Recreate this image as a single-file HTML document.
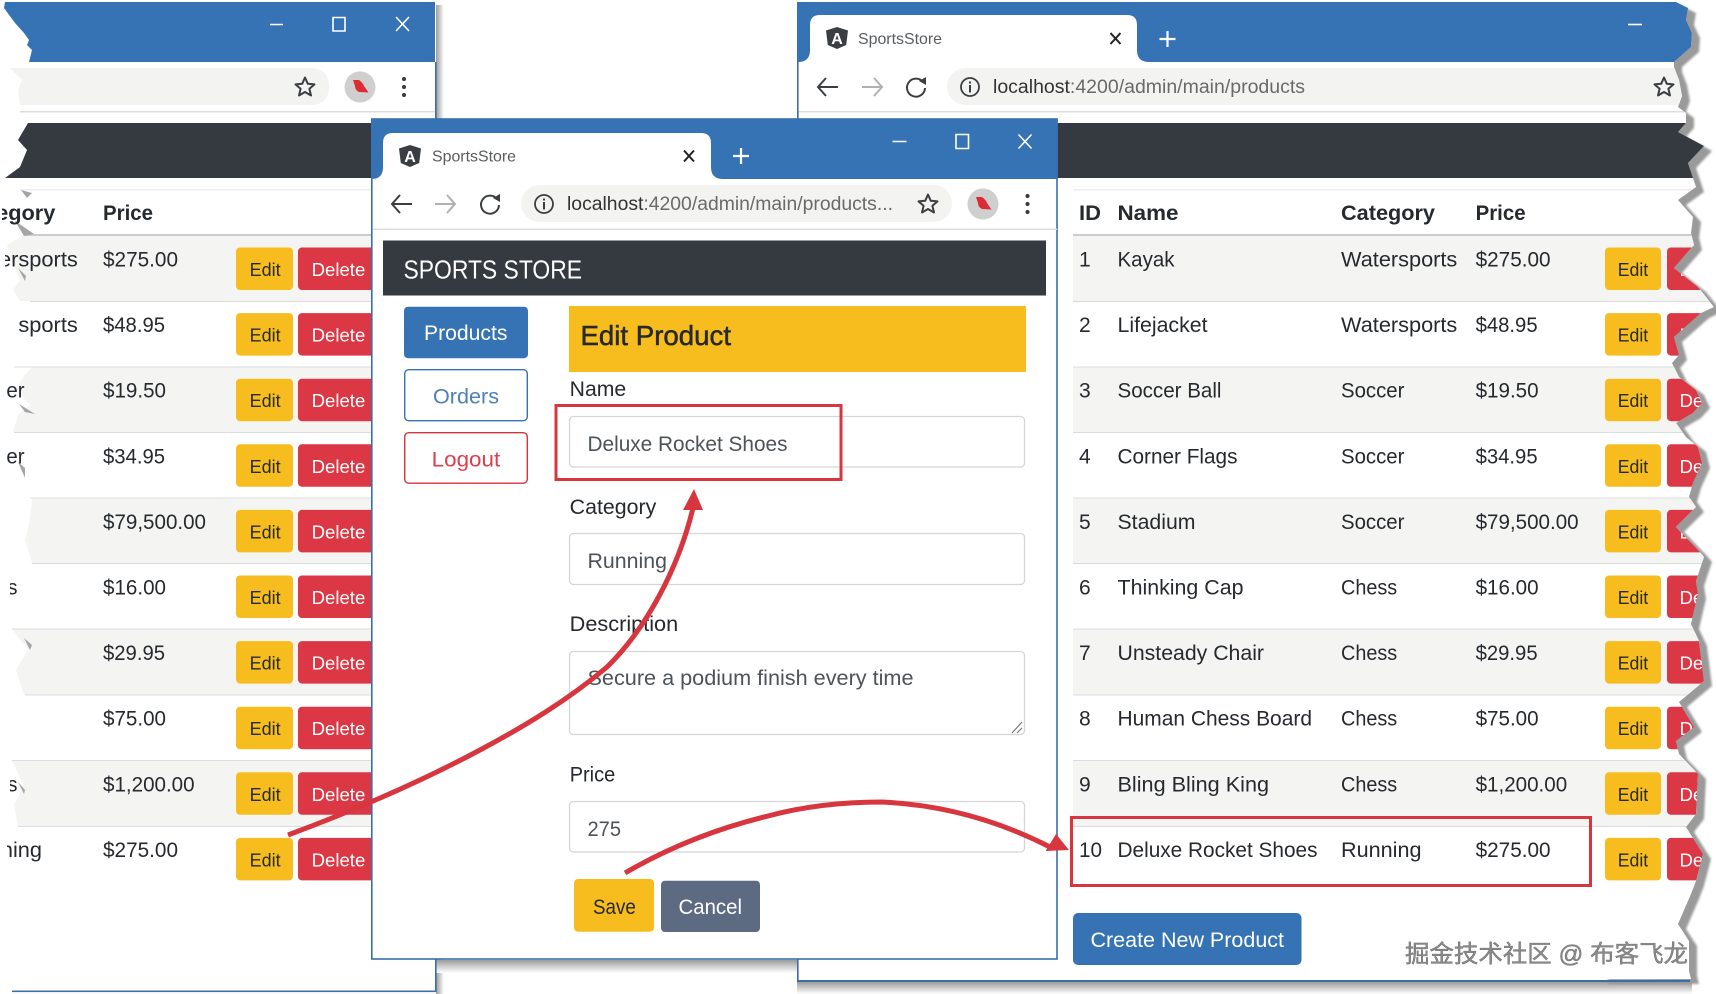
<!DOCTYPE html>
<html lang="en"><head><meta charset="utf-8"><title>SportsStore</title>
<style>
html,body{margin:0;padding:0;background:#fff;width:1716px;height:994px;overflow:hidden}
svg{display:block;position:absolute;left:0;top:0}
text{font-family:"Liberation Sans","Noto Sans CJK SC",sans-serif;font-size:21px;fill:#26292d;white-space:pre}
.h{font-weight:bold}
.b{font-size:18px;text-anchor:start}
.w{fill:#fff}
.m{fill:#4d5358}
.tab{font-size:16px;fill:#5a5d60}
.url{font-size:19px;fill:#6a6a6a}
.ic{fill:none;stroke:#3c3f42;stroke-width:2}
</style></head><body>
<svg width="1716" height="994" viewBox="0 0 1716 994" xmlns="http://www.w3.org/2000/svg">
<defs>
<linearGradient id="gd" x1="0" y1="0" x2="0" y2="1"><stop offset="0" stop-color="#9c9c9c"/><stop offset="1" stop-color="#fff"/></linearGradient>
<linearGradient id="gr" x1="0" y1="0" x2="1" y2="0"><stop offset="0" stop-color="#9c9c9c"/><stop offset="1" stop-color="#fff"/></linearGradient>
<filter id="bl" x="-5%" y="-5%" width="110%" height="110%"><feGaussianBlur stdDeviation="1"/></filter>
<clipPath id="cr"><polygon points="797,2 1676,2 1688,8 1686,20 1692,33 1691,47 1674,62 1674,67 1679,80 1682,96 1678,107 1686,113 1686,123 1678,132 1704,146 1688,163 1693,178 1696,187 1678,200 1693,217 1691,233 1694,245 1674,268 1698,287 1714,307 1701,313 1674,337 1679,355 1672,363 1679,377 1696,390 1702,403 1693,413 1676,423 1686,437 1698,447 1702,463 1693,483 1689,497 1696,507 1676,527 1699,551 1704,557 1696,581 1698,594 1694,611 1691,624 1699,641 1704,681 1679,702 1694,727 1676,741 1679,754 1698,774 1696,814 1686,827 1703,854 1696,881 1691,894 1678,924 1689,941 1689,971 1691,979 797,981"/></clipPath>
<clipPath id="c1"><rect x="5" y="240" width="100" height="50"/></clipPath>
<clipPath id="c2"><rect x="18" y="305" width="100" height="50"/></clipPath>
<clipPath id="c3"><rect x="7" y="370" width="100" height="50"/></clipPath>
<clipPath id="c4"><rect x="6" y="436" width="100" height="50"/></clipPath>
<clipPath id="c6"><rect x="10" y="567" width="100" height="50"/></clipPath>
<clipPath id="c9"><rect x="10" y="764" width="100" height="50"/></clipPath>
<clipPath id="c10"><rect x="7" y="830" width="100" height="50"/></clipPath>
<clipPath id="ch"><rect x="2" y="190" width="100" height="40"/></clipPath>
<g id="back"><path class="ic" d="M-10 0H10M-2 -9L-10 0L-2 9"/></g>
<g id="fwd"><path class="ic" style="stroke:#b0b0b0" d="M-10 0H10M2 -9L10 0L2 9"/></g>
<g id="rel"><path class="ic" d="M7 -5A9 9 0 1 0 9 1"/><path fill="#3c3f42" d="M3 -6L10 -10V-2Z"/></g>
<g id="star"><path fill="none" stroke="#3c3f42" stroke-width="2" stroke-linejoin="round" d="M0 -9.5L2.8 -3.2L9.5 -2.6L4.4 1.8L6 8.5L0 5L-6 8.5L-4.4 1.8L-9.5 -2.6L-2.8 -3.2Z"/></g>
<g id="info"><circle r="9" fill="none" stroke="#3c3f42" stroke-width="1.8"/><rect x="-1" y="-2" width="2" height="7.5" fill="#3c3f42"/><rect x="-1" y="-5.5" width="2" height="2" fill="#3c3f42"/></g>
<g id="dots"><circle cy="-8" r="2.1" fill="#3c3f42"/><circle r="2.1" fill="#3c3f42"/><circle cy="8" r="2.1" fill="#3c3f42"/></g>
<g id="av"><circle r="15.5" fill="#cfcfcf"/><path fill="#dd2b33" d="M-7 -7L-1 -7Q3 -4 4 -1L8.5 5.5L-1 5Q-5 3 -5 -1Z"/></g>
<g id="sh"><path fill="#3a3d42" d="M0 -11L11 -7.5L9.2 7L0 11L-9.2 7L-11 -7.5Z"/></g>
</defs>

<!-- LEFT WINDOW -->
<rect x="436" y="5" width="8" height="114" fill="url(#gr)"/>
<rect x="436" y="959" width="8" height="35" fill="url(#gr)"/>
<rect x="436" y="960" width="361" height="13" fill="url(#gd)"/>
<polygon fill="#3673b5" points="5,2 435,2 435,62 29,62 32,50 27,45 29,40 24,33 15,23 4,8"/>
<path stroke="#fff" stroke-width="1.6" fill="none" d="M270 24.5H283M333 17.5H345V31H333ZM396 17L409 31M409 17L396 31"/>
<path fill="#f3f3f1" d="M10 68H310Q329 68 329 86.5Q329 105 310 105H20L18 90L22 80Z"/>
<use href="#star" x="305" y="87"/><use href="#av" x="360" y="87"/><use href="#dots" x="404" y="87"/>
<rect x="20" y="111" width="415" height="1.5" fill="#dcdcdc"/>
<polygon fill="#343a40" points="28,123 371,123 371,178 5,178 20,167 27,150 18,140"/>
<rect x="20" y="189" width="351" height="1.5" fill="#eee"/>
<rect x="435" y="62" width="1.6" height="930" fill="#3a6ea8"/>
<rect x="12" y="990.5" width="424" height="1.6" fill="#3a6ea8"/>

<rect x="25" y="234" width="346" height="2" fill="#ccc"/>
<polygon fill="#f4f4f3" points="22,236 371,236 371,301 20,301 13,290 20,280 12,262 7,245"/>
<polygon fill="#f4f4f3" points="32,367 371,367 371,432 13,432 18,415 30,405 16,390 24,376"/>
<polygon fill="#f4f4f3" points="32,498 371,498 371,563 32,563 25,540 30,520"/>
<polygon fill="#f4f4f3" points="12,629 371,629 371,695 24,695 16,670 28,650"/>
<polygon fill="#f4f4f3" points="12,761 371,761 371,826 18,826 14,805 24,785"/>
<path stroke="#dcdcdc" stroke-width="1" d="M30 301.5H371M14 367H371M14 432.5H371M30 498H371M32 563.5H371M12 629H371M25 695H371M12 760.5H371M18 826.5H371"/>
<path fill="#a5a5a5" d="M21 190L32 193L27 198ZM15 221L34 234L24 236ZM18 268L26 276L25 281ZM19 404L35 414L25 412ZM18 462L25 468L25 478ZM24 638L32 645L30 650ZM18 782L25 790L24 794Z"/>

<text class="h" x="-39" y="220" textLength="94.4" lengthAdjust="spacingAndGlyphs" clip-path="url(#ch)">Category</text>
<text class="h" x="103" y="220" textLength="50" lengthAdjust="spacingAndGlyphs">Price</text>
<g>
<text x="-39" y="266.5" textLength="116.8" lengthAdjust="spacingAndGlyphs" clip-path="url(#c1)">Watersports</text>
<text x="-39" y="332.1" textLength="116.8" lengthAdjust="spacingAndGlyphs" clip-path="url(#c2)">Watersports</text>
<text x="-39" y="397.7" textLength="63.6" lengthAdjust="spacingAndGlyphs" clip-path="url(#c3)">Soccer</text>
<text x="-39" y="463.3" textLength="63.6" lengthAdjust="spacingAndGlyphs" clip-path="url(#c4)">Soccer</text>
<text x="-39" y="594.5" textLength="56.5" lengthAdjust="spacingAndGlyphs" clip-path="url(#c6)">Chess</text>
<text x="-39" y="791.3" textLength="56.5" lengthAdjust="spacingAndGlyphs" clip-path="url(#c9)">Chess</text>
<text x="-39" y="856.9" textLength="81" lengthAdjust="spacingAndGlyphs" clip-path="url(#c10)">Running</text>
</g>
<g>
<text x="103" y="266.5" textLength="75" lengthAdjust="spacingAndGlyphs">$275.00</text>
<text x="103" y="332.1" textLength="62" lengthAdjust="spacingAndGlyphs">$48.95</text>
<text x="103" y="397.7" textLength="63" lengthAdjust="spacingAndGlyphs">$19.50</text>
<text x="103" y="463.3" textLength="62" lengthAdjust="spacingAndGlyphs">$34.95</text>
<text x="103" y="528.9" textLength="103" lengthAdjust="spacingAndGlyphs">$79,500.00</text>
<text x="103" y="594.5" textLength="63" lengthAdjust="spacingAndGlyphs">$16.00</text>
<text x="103" y="660.1" textLength="62" lengthAdjust="spacingAndGlyphs">$29.95</text>
<text x="103" y="725.7" textLength="63" lengthAdjust="spacingAndGlyphs">$75.00</text>
<text x="103" y="791.3" textLength="91.6" lengthAdjust="spacingAndGlyphs">$1,200.00</text>
<text x="103" y="856.9" textLength="75" lengthAdjust="spacingAndGlyphs">$275.00</text>
</g>
<g fill="#f7bd1e">
<rect x="236" y="247.5" width="57" height="42.5" rx="4"/><rect x="236" y="313.1" width="57" height="42.5" rx="4"/><rect x="236" y="378.7" width="57" height="42.5" rx="4"/><rect x="236" y="444.3" width="57" height="42.5" rx="4"/><rect x="236" y="509.9" width="57" height="42.5" rx="4"/><rect x="236" y="575.5" width="57" height="42.5" rx="4"/><rect x="236" y="641.1" width="57" height="42.5" rx="4"/><rect x="236" y="706.7" width="57" height="42.5" rx="4"/><rect x="236" y="772.3" width="57" height="42.5" rx="4"/><rect x="236" y="837.9" width="57" height="42.5" rx="4"/>
</g>
<g fill="#dc3744">
<rect x="298" y="247.5" width="85" height="42.5" rx="4"/><rect x="298" y="313.1" width="85" height="42.5" rx="4"/><rect x="298" y="378.7" width="85" height="42.5" rx="4"/><rect x="298" y="444.3" width="85" height="42.5" rx="4"/><rect x="298" y="509.9" width="85" height="42.5" rx="4"/><rect x="298" y="575.5" width="85" height="42.5" rx="4"/><rect x="298" y="641.1" width="85" height="42.5" rx="4"/><rect x="298" y="706.7" width="85" height="42.5" rx="4"/><rect x="298" y="772.3" width="85" height="42.5" rx="4"/><rect x="298" y="837.9" width="85" height="42.5" rx="4"/>
</g>
<g>
<text class="b" x="249.6" y="276" textLength="31" lengthAdjust="spacingAndGlyphs">Edit</text><text class="b" x="249.6" y="341.6" textLength="31" lengthAdjust="spacingAndGlyphs">Edit</text><text class="b" x="249.6" y="407.2" textLength="31" lengthAdjust="spacingAndGlyphs">Edit</text><text class="b" x="249.6" y="472.8" textLength="31" lengthAdjust="spacingAndGlyphs">Edit</text><text class="b" x="249.6" y="538.4" textLength="31" lengthAdjust="spacingAndGlyphs">Edit</text><text class="b" x="249.6" y="604" textLength="31" lengthAdjust="spacingAndGlyphs">Edit</text><text class="b" x="249.6" y="669.6" textLength="31" lengthAdjust="spacingAndGlyphs">Edit</text><text class="b" x="249.6" y="735.2" textLength="31" lengthAdjust="spacingAndGlyphs">Edit</text><text class="b" x="249.6" y="800.8" textLength="31" lengthAdjust="spacingAndGlyphs">Edit</text><text class="b" x="249.6" y="866.4" textLength="31" lengthAdjust="spacingAndGlyphs">Edit</text>
<text class="b w" x="311.6" y="276" textLength="53.7" lengthAdjust="spacingAndGlyphs">Delete</text><text class="b w" x="311.6" y="341.6" textLength="53.7" lengthAdjust="spacingAndGlyphs">Delete</text><text class="b w" x="311.6" y="407.2" textLength="53.7" lengthAdjust="spacingAndGlyphs">Delete</text><text class="b w" x="311.6" y="472.8" textLength="53.7" lengthAdjust="spacingAndGlyphs">Delete</text><text class="b w" x="311.6" y="538.4" textLength="53.7" lengthAdjust="spacingAndGlyphs">Delete</text><text class="b w" x="311.6" y="604" textLength="53.7" lengthAdjust="spacingAndGlyphs">Delete</text><text class="b w" x="311.6" y="669.6" textLength="53.7" lengthAdjust="spacingAndGlyphs">Delete</text><text class="b w" x="311.6" y="735.2" textLength="53.7" lengthAdjust="spacingAndGlyphs">Delete</text><text class="b w" x="311.6" y="800.8" textLength="53.7" lengthAdjust="spacingAndGlyphs">Delete</text><text class="b w" x="311.6" y="866.4" textLength="53.7" lengthAdjust="spacingAndGlyphs">Delete</text>
</g>

<!-- RIGHT WINDOW -->
<rect x="797" y="982" width="895" height="12" fill="url(#gd)"/>
<g transform="translate(8,5)" filter="url(#bl)"><polygon fill="#9a9a9a" points="1676,2 1688,8 1686,20 1692,33 1691,47 1674,62 1674,67 1679,80 1682,96 1678,107 1686,113 1686,123 1678,132 1704,146 1688,163 1693,178 1696,187 1678,200 1693,217 1691,233 1694,245 1674,268 1698,287 1714,307 1701,313 1674,337 1679,355 1672,363 1679,377 1696,390 1702,403 1693,413 1676,423 1686,437 1698,447 1702,463 1693,483 1689,497 1696,507 1676,527 1699,551 1704,557 1696,581 1698,594 1694,611 1691,624 1699,641 1704,681 1679,702 1694,727 1676,741 1679,754 1698,774 1696,814 1686,827 1703,854 1696,881 1691,894 1678,924 1689,941 1689,971 1691,979 1600,979 1600,2"/></g>
<g clip-path="url(#cr)">
<rect x="797" y="2" width="920" height="980" fill="#fff"/>
<rect x="797" y="2" width="920" height="60" fill="#3673b5"/>
<path fill="#fff" d="M798 62Q810 62 810 50V25Q810 15 820 15H1127Q1137 15 1137 25V50Q1137 62 1149 62Z"/>
<rect x="947" y="68" width="760" height="37" rx="18.5" fill="#f3f3f1"/>
<rect x="797" y="111" width="920" height="1.5" fill="#dcdcdc"/>
<rect x="797" y="123" width="920" height="55" fill="#343a40"/>
<rect x="1073" y="189" width="640" height="1.5" fill="#eee"/>
<rect x="1073" y="234" width="640" height="2" fill="#ccc"/>
<g fill="#f4f4f3"><rect x="1073" y="236" width="640" height="65"/><rect x="1073" y="367" width="640" height="65"/><rect x="1073" y="498" width="640" height="65"/><rect x="1073" y="629" width="640" height="66"/><rect x="1073" y="761" width="640" height="65"/></g>
<path stroke="#dcdcdc" stroke-width="1" d="M1073 301.5H1714M1073 367H1714M1073 432.5H1714M1073 498H1714M1073 563.5H1714M1073 629H1714M1073 695H1714M1073 760.5H1714M1073 826.5H1714"/>
<g fill="#f7bd1e">
<rect x="1605" y="247.5" width="56" height="42.5" rx="4"/><rect x="1605" y="313.1" width="56" height="42.5" rx="4"/><rect x="1605" y="378.7" width="56" height="42.5" rx="4"/><rect x="1605" y="444.3" width="56" height="42.5" rx="4"/><rect x="1605" y="509.9" width="56" height="42.5" rx="4"/><rect x="1605" y="575.5" width="56" height="42.5" rx="4"/><rect x="1605" y="641.1" width="56" height="42.5" rx="4"/><rect x="1605" y="706.7" width="56" height="42.5" rx="4"/><rect x="1605" y="772.3" width="56" height="42.5" rx="4"/><rect x="1605" y="837.9" width="56" height="42.5" rx="4"/>
</g>
<g fill="#dc3744">
<rect x="1667" y="247.5" width="70" height="42.5" rx="4"/><rect x="1667" y="313.1" width="70" height="42.5" rx="4"/><rect x="1667" y="378.7" width="70" height="42.5" rx="4"/><rect x="1667" y="444.3" width="70" height="42.5" rx="4"/><rect x="1667" y="509.9" width="70" height="42.5" rx="4"/><rect x="1667" y="575.5" width="70" height="42.5" rx="4"/><rect x="1667" y="641.1" width="70" height="42.5" rx="4"/><rect x="1667" y="706.7" width="70" height="42.5" rx="4"/><rect x="1667" y="772.3" width="70" height="42.5" rx="4"/><rect x="1667" y="837.9" width="70" height="42.5" rx="4"/>
</g>
<text class="b w" x="1679.5" y="276" textLength="53.7" lengthAdjust="spacingAndGlyphs">Delete</text><text class="b w" x="1679.5" y="341.6" textLength="53.7" lengthAdjust="spacingAndGlyphs">Delete</text><text class="b w" x="1679.5" y="407.2" textLength="53.7" lengthAdjust="spacingAndGlyphs">Delete</text><text class="b w" x="1679.5" y="472.8" textLength="53.7" lengthAdjust="spacingAndGlyphs">Delete</text><text class="b w" x="1679.5" y="538.4" textLength="53.7" lengthAdjust="spacingAndGlyphs">Delete</text><text class="b w" x="1679.5" y="604" textLength="53.7" lengthAdjust="spacingAndGlyphs">Delete</text><text class="b w" x="1679.5" y="669.6" textLength="53.7" lengthAdjust="spacingAndGlyphs">Delete</text><text class="b w" x="1679.5" y="735.2" textLength="53.7" lengthAdjust="spacingAndGlyphs">Delete</text><text class="b w" x="1679.5" y="800.8" textLength="53.7" lengthAdjust="spacingAndGlyphs">Delete</text><text class="b w" x="1679.5" y="866.4" textLength="53.7" lengthAdjust="spacingAndGlyphs">Delete</text>
</g>
<rect x="797" y="62" width="1.6" height="920" fill="#3a6ea8"/>
<rect x="797" y="980" width="893" height="2" fill="#3a6ea8"/>
<path stroke="#fff" stroke-width="1.6" fill="none" d="M1628 24.5H1642"/>
<use href="#sh" x="837" y="38"/>
<text x="837" y="44" text-anchor="middle" class="w" style="font-size:16px;font-weight:bold">A</text>
<text class="tab" x="858" y="44" textLength="84" lengthAdjust="spacingAndGlyphs">SportsStore</text>
<path stroke="#222" stroke-width="2" fill="none" d="M1110.5 33L1120.5 44M1120.5 33L1110.5 44"/>
<path stroke="#fff" stroke-width="2.2" fill="none" d="M1159.5 39H1175.5M1167.5 31V47"/>
<use href="#back" x="828" y="87"/><use href="#fwd" x="872" y="87"/><use href="#rel" x="916" y="87"/><use href="#info" x="970" y="87"/>
<text class="url" x="993" y="93" textLength="312" lengthAdjust="spacingAndGlyphs"><tspan style="fill:#333">localhost</tspan>:4200/admin/main/products</text>
<use href="#star" x="1664" y="87"/>

<text class="h" x="1079" y="220" textLength="22" lengthAdjust="spacingAndGlyphs">ID</text>
<text class="h" x="1117.5" y="220" textLength="61" lengthAdjust="spacingAndGlyphs">Name</text>
<text class="h" x="1341" y="220" textLength="94" lengthAdjust="spacingAndGlyphs">Category</text>
<text class="h" x="1475.6" y="220" textLength="50" lengthAdjust="spacingAndGlyphs">Price</text>

<g>
<text x="1079" y="266.5">1</text><text x="1117.5" y="266.5" textLength="57" lengthAdjust="spacingAndGlyphs">Kayak</text><text x="1341" y="266.5" textLength="116.3" lengthAdjust="spacingAndGlyphs">Watersports</text><text x="1475.6" y="266.5" textLength="75" lengthAdjust="spacingAndGlyphs">$275.00</text>
<text x="1079" y="332.1">2</text><text x="1117.5" y="332.1" textLength="90" lengthAdjust="spacingAndGlyphs">Lifejacket</text><text x="1341" y="332.1" textLength="116.3" lengthAdjust="spacingAndGlyphs">Watersports</text><text x="1475.6" y="332.1" textLength="62" lengthAdjust="spacingAndGlyphs">$48.95</text>
<text x="1079" y="397.7">3</text><text x="1117.5" y="397.7" textLength="104" lengthAdjust="spacingAndGlyphs">Soccer Ball</text><text x="1341" y="397.7" textLength="63.4" lengthAdjust="spacingAndGlyphs">Soccer</text><text x="1475.6" y="397.7" textLength="63" lengthAdjust="spacingAndGlyphs">$19.50</text>
<text x="1079" y="463.3">4</text><text x="1117.5" y="463.3" textLength="120" lengthAdjust="spacingAndGlyphs">Corner Flags</text><text x="1341" y="463.3" textLength="63.4" lengthAdjust="spacingAndGlyphs">Soccer</text><text x="1475.6" y="463.3" textLength="62" lengthAdjust="spacingAndGlyphs">$34.95</text>
<text x="1079" y="528.9">5</text><text x="1117.5" y="528.9" textLength="78" lengthAdjust="spacingAndGlyphs">Stadium</text><text x="1341" y="528.9" textLength="63.4" lengthAdjust="spacingAndGlyphs">Soccer</text><text x="1475.6" y="528.9" textLength="103" lengthAdjust="spacingAndGlyphs">$79,500.00</text>
<text x="1079" y="594.5">6</text><text x="1117.5" y="594.5" textLength="126" lengthAdjust="spacingAndGlyphs">Thinking Cap</text><text x="1341" y="594.5" textLength="56.2" lengthAdjust="spacingAndGlyphs">Chess</text><text x="1475.6" y="594.5" textLength="63" lengthAdjust="spacingAndGlyphs">$16.00</text>
<text x="1079" y="660.1">7</text><text x="1117.5" y="660.1" textLength="146.5" lengthAdjust="spacingAndGlyphs">Unsteady Chair</text><text x="1341" y="660.1" textLength="56.2" lengthAdjust="spacingAndGlyphs">Chess</text><text x="1475.6" y="660.1" textLength="62" lengthAdjust="spacingAndGlyphs">$29.95</text>
<text x="1079" y="725.7">8</text><text x="1117.5" y="725.7" textLength="194.5" lengthAdjust="spacingAndGlyphs">Human Chess Board</text><text x="1341" y="725.7" textLength="56.2" lengthAdjust="spacingAndGlyphs">Chess</text><text x="1475.6" y="725.7" textLength="63" lengthAdjust="spacingAndGlyphs">$75.00</text>
<text x="1079" y="791.3">9</text><text x="1117.5" y="791.3" textLength="151.5" lengthAdjust="spacingAndGlyphs">Bling Bling King</text><text x="1341" y="791.3" textLength="56.2" lengthAdjust="spacingAndGlyphs">Chess</text><text x="1475.6" y="791.3" textLength="91.6" lengthAdjust="spacingAndGlyphs">$1,200.00</text>
<text x="1079" y="856.9" textLength="23" lengthAdjust="spacingAndGlyphs">10</text><text x="1117.5" y="856.9" textLength="200" lengthAdjust="spacingAndGlyphs">Deluxe Rocket Shoes</text><text x="1341" y="856.9" textLength="80.5" lengthAdjust="spacingAndGlyphs">Running</text><text x="1475.6" y="856.9" textLength="75" lengthAdjust="spacingAndGlyphs">$275.00</text>
</g>
<g>
<text class="b" x="1617.7" y="276" textLength="30.5" lengthAdjust="spacingAndGlyphs">Edit</text><text class="b" x="1617.7" y="341.6" textLength="30.5" lengthAdjust="spacingAndGlyphs">Edit</text><text class="b" x="1617.7" y="407.2" textLength="30.5" lengthAdjust="spacingAndGlyphs">Edit</text><text class="b" x="1617.7" y="472.8" textLength="30.5" lengthAdjust="spacingAndGlyphs">Edit</text><text class="b" x="1617.7" y="538.4" textLength="30.5" lengthAdjust="spacingAndGlyphs">Edit</text><text class="b" x="1617.7" y="604" textLength="30.5" lengthAdjust="spacingAndGlyphs">Edit</text><text class="b" x="1617.7" y="669.6" textLength="30.5" lengthAdjust="spacingAndGlyphs">Edit</text><text class="b" x="1617.7" y="735.2" textLength="30.5" lengthAdjust="spacingAndGlyphs">Edit</text><text class="b" x="1617.7" y="800.8" textLength="30.5" lengthAdjust="spacingAndGlyphs">Edit</text><text class="b" x="1617.7" y="866.4" textLength="30.5" lengthAdjust="spacingAndGlyphs">Edit</text>
</g>
<rect x="1071.5" y="817.5" width="519" height="68" fill="none" stroke="#d8363f" stroke-width="3"/>
<rect x="1073" y="913" width="228.5" height="52" rx="5" fill="#3673b5"/>
<text class="w" x="1090.5" y="947" textLength="193.5" lengthAdjust="spacingAndGlyphs">Create New Product</text>
<text x="1405" y="962" textLength="283" lengthAdjust="spacingAndGlyphs" style="font-size:24px;fill:#8a8a8a;stroke:#5e5e5e;stroke-width:.35px">掘金技术社区 @ 布客飞龙</text>

<!-- MIDDLE WINDOW -->
<rect x="371.8" y="119" width="685.2" height="840" fill="#fff" stroke="#3a6ea8" stroke-width="1.6"/>
<rect x="371" y="119" width="686.8" height="60" fill="#3673b5"/>
<path fill="#fff" d="M371.8 179Q383 179 383 167V143Q383 133 393 133H701Q711 133 711 143V167Q711 179 723 179Z"/>
<use href="#sh" x="410" y="156"/>
<text x="410" y="162" text-anchor="middle" class="w" style="font-size:16px;font-weight:bold">A</text>
<text class="tab" x="432" y="161.5" textLength="84" lengthAdjust="spacingAndGlyphs">SportsStore</text>
<path stroke="#222" stroke-width="2" fill="none" d="M684 150.5L694 161.5M694 150.5L684 161.5"/>
<path stroke="#fff" stroke-width="2.2" fill="none" d="M733 156H749M741 148V164"/>
<path stroke="#fff" stroke-width="1.6" fill="none" d="M892.5 141.5H906.5M956 134.5H968.5V148.5H956ZM1018.5 134.5L1031.5 148.5M1031.5 134.5L1018.5 148.5"/>
<rect x="521" y="185" width="431" height="37" rx="18.5" fill="#f3f3f1"/>
<use href="#back" x="402" y="204"/><use href="#fwd" x="445" y="204"/><use href="#rel" x="490" y="204"/><use href="#info" x="544" y="204"/>
<text class="url" x="567" y="210" textLength="326" lengthAdjust="spacingAndGlyphs"><tspan style="fill:#333">localhost</tspan>:4200/admin/main/products...</text>
<use href="#star" x="928" y="204"/><use href="#av" x="983" y="204"/><use href="#dots" x="1027.5" y="204"/>
<rect x="373" y="228.5" width="684" height="1.5" fill="#dcdcdc"/>
<rect x="383" y="240.5" width="663" height="55" fill="#343a40"/>
<text class="w" x="403.5" y="278.5" style="font-size:26px" textLength="178.5" lengthAdjust="spacingAndGlyphs">SPORTS STORE</text>

<rect x="404" y="306.7" width="124" height="51.5" rx="4" fill="#3673b5"/>
<text class="w" x="424" y="340" textLength="83.4" lengthAdjust="spacingAndGlyphs">Products</text>
<rect x="404.7" y="369.7" width="122.6" height="51" rx="4" fill="#fff" stroke="#3673b5" stroke-width="1.4"/>
<text x="433" y="403.5" textLength="66" lengthAdjust="spacingAndGlyphs" style="fill:#4f7fb8">Orders</text>
<rect x="404.7" y="432.7" width="122.6" height="50.5" rx="4" fill="#fff" stroke="#d8323f" stroke-width="1.4"/>
<text x="431.7" y="466.5" textLength="68.5" lengthAdjust="spacingAndGlyphs" style="fill:#dc3f4b">Logout</text>

<rect x="569" y="306" width="457" height="66" fill="#f7bd1e"/>
<text x="580.5" y="345" textLength="150.5" lengthAdjust="spacingAndGlyphs" style="font-size:28px;stroke:#26292d;stroke-width:.5px">Edit Product</text>

<text x="569.7" y="396" textLength="56.5" lengthAdjust="spacingAndGlyphs">Name</text>
<rect x="569.5" y="416.5" width="455" height="50.5" rx="4" fill="#fff" stroke="#d4d6d8" stroke-width="1.3"/>
<text class="m" x="587.5" y="451" textLength="200" lengthAdjust="spacingAndGlyphs">Deluxe Rocket Shoes</text>
<text x="569.7" y="514" textLength="86.6" lengthAdjust="spacingAndGlyphs">Category</text>
<rect x="569.5" y="533.5" width="455" height="51" rx="4" fill="#fff" stroke="#d4d6d8" stroke-width="1.3"/>
<text class="m" x="587.5" y="568" textLength="79.5" lengthAdjust="spacingAndGlyphs">Running</text>
<text x="569.7" y="631" textLength="108.5" lengthAdjust="spacingAndGlyphs">Description</text>
<rect x="569.5" y="651.5" width="455" height="83" rx="4" fill="#fff" stroke="#d4d6d8" stroke-width="1.3"/>
<text class="m" x="587.5" y="685" textLength="326" lengthAdjust="spacingAndGlyphs">Secure a podium finish every time</text>
<path stroke="#777" stroke-width="1.2" fill="none" d="M1012 733L1022 722M1017 733L1022 728"/>
<text x="569.7" y="781.5" textLength="45.5" lengthAdjust="spacingAndGlyphs">Price</text>
<rect x="569.5" y="801.5" width="455" height="50.5" rx="4" fill="#fff" stroke="#d4d6d8" stroke-width="1.3"/>
<text class="m" x="587.5" y="836" textLength="33.5" lengthAdjust="spacingAndGlyphs">275</text>

<rect x="574" y="879" width="80" height="52.7" rx="4" fill="#f7bd1e"/>
<text x="593" y="914" textLength="42.8" lengthAdjust="spacingAndGlyphs">Save</text>
<rect x="661" y="880.7" width="99" height="51.3" rx="4" fill="#5c6a82"/>
<text class="w" x="678.5" y="914" textLength="63.5" lengthAdjust="spacingAndGlyphs">Cancel</text>

<!-- ANNOTATIONS -->
<rect x="556" y="405.5" width="285" height="74" fill="none" stroke="#d8363f" stroke-width="3"/>
<path fill="none" stroke="#d8363f" stroke-width="5" d="M288 835C350 812 420 782 480 750C525 726 568 700 607 667C645 630 678 570 693 508"/>
<polygon fill="#d8363f" points="694,489 703,510 683,510"/>
<path fill="none" stroke="#d8363f" stroke-width="5" d="M625 873Q690 835 768 816Q820 802 882 802Q970 806 1050 847"/>
<polygon fill="#d8363f" points="1069,850 1056,834 1045.6,851"/>
</svg>
</body></html>
